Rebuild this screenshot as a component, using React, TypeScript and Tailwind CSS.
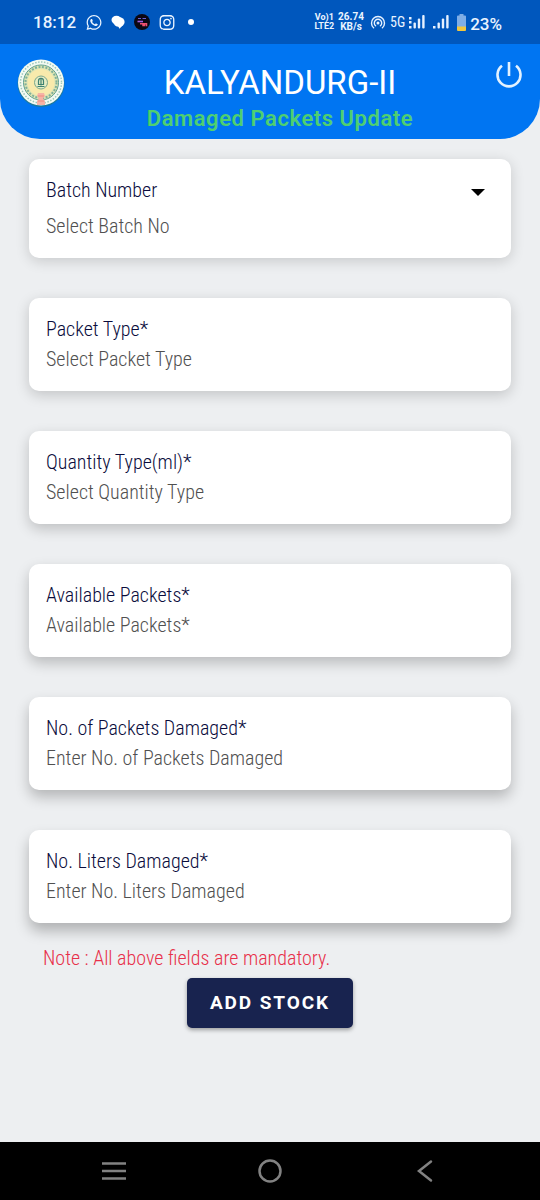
import React from 'react';
import { FaInstagram, FaWhatsapp } from 'react-icons/fa';

type FieldProps = {
  id: string;
  label: string;
  placeholder: string;
  shadow: string;
};

const FIELDS: FieldProps[] = [
  { id: 'packet-type', label: 'Packet Type*', placeholder: 'Select Packet Type', shadow: 'shadow-[0_4px_14px_rgba(0,0,0,0.18)]' },
  { id: 'quantity-type', label: 'Quantity Type(ml)*', placeholder: 'Select Quantity Type', shadow: 'shadow-[0_5px_14px_rgba(0,0,0,0.20)]' },
  { id: 'available-packets', label: 'Available Packets*', placeholder: 'Available Packets*', shadow: 'shadow-[0_6px_14px_rgba(0,0,0,0.22)]' },
  { id: 'packets-damaged', label: 'No. of Packets Damaged*', placeholder: 'Enter No. of Packets Damaged', shadow: 'shadow-[0_7px_14px_rgba(0,0,0,0.24)]' },
  { id: 'liters-damaged', label: 'No. Liters Damaged*', placeholder: 'Enter No. Liters Damaged', shadow: 'shadow-[0_8px_14px_rgba(0,0,0,0.26)]' },
];

function MessageIcon() {
  return (
    <svg viewBox="0 0 14 14" className="h-3.5 w-3.5" fill="#fff">
      <ellipse cx="5.500" cy="5" rx="5" ry="4.200" />
      <ellipse cx="8" cy="7" rx="5.600" ry="4.800" />
      <path d="M7 11l1.500 2.800L12 10z" />
    </svg>
  );
}

function AppBadgeIcon() {
  return (
    <svg viewBox="0 0 16 16" className="h-4 w-4">
      <circle cx="8" cy="8" r="8" fill="#0b0712" />
      <path d="M4 4.500h3M8.500 4.500h3.500" stroke="#6b5fd4" strokeWidth="1.200" fill="none" />
      <path d="M3.500 7.500h5.500" stroke="#a45be0" strokeWidth="1.600" />
      <path d="M6 9.800h3v2.500M10.500 12.300V9.800h2v2.500" stroke="#f0506f" strokeWidth="1.500" fill="none" />
    </svg>
  );
}

function HotspotIcon() {
  return (
    <svg viewBox="0 0 16 14" className="h-3.5 w-4" fill="none" stroke="#e6f1ff" strokeWidth="1.400" strokeLinecap="round">
      <circle cx="8" cy="8" r="1.500" fill="#e6f1ff" stroke="none" />
      <path d="M5.600 10.800a3.700 3.700 0 1 1 4.800 0" />
      <path d="M3.600 12.800a6.500 6.500 0 1 1 8.800 0" />
    </svg>
  );
}

function SignalIcon({ roaming = false }: { roaming?: boolean }) {
  return (
    <svg viewBox="0 0 16 16" className="h-4 w-4" fill="#e6f1ff">
      {roaming ? (
        <path d="M0 3h2.500v2.500H0zM0 7h2.500v2.500H0zM0 12h2.500v2.500H0z" />
      ) : (
        <path d="M0 12h2.500v2.500H0z" />
      )}
      <rect x="4.500" y="8.500" width="2.400" height="6" rx="1" />
      <rect x="8.800" y="4.500" width="2.400" height="10" rx="1" />
      <rect x="13.200" y="1" width="2.400" height="13.500" rx="1" />
    </svg>
  );
}

function BatteryIcon() {
  return (
    <svg viewBox="0 0 9 17" className="h-[17px] w-[9px]">
      <path d="M2.500 0h4v1.500H8a1 1 0 0 1 1 1V13H0V2.500a1 1 0 0 1 1-1h1.500z" fill="#7faee6" />
      <path d="M0 12.500h9V16a1 1 0 0 1-1 1H1a1 1 0 0 1-1-1z" fill="#f3c73c" />
    </svg>
  );
}

function StateEmblem() {
  return (
    <svg viewBox="0 0 48 50" className="h-[50px] w-12 shrink-0" fill="none">
      <circle cx="24" cy="25.500" r="23.500" fill="#1c7a9c" />
      <circle cx="24" cy="24.500" r="23" fill="#f3faf3" />
      <circle cx="24" cy="24.500" r="20.500" stroke="#9cc8bb" strokeWidth="1.500" strokeDasharray="1.500 1.500" />
      <circle cx="24" cy="24.500" r="17.500" fill="#dfe5b4" stroke="#5fa08f" strokeWidth="1" />
      <circle cx="24" cy="24.500" r="15.500" stroke="#7fb09a" strokeWidth="2" strokeDasharray="2 1.500" />
      <circle cx="24" cy="24.500" r="13.500" fill="#f8eaac" />
      <circle cx="24" cy="24.500" r="6.500" fill="#e6edc4" stroke="#7aa88e" strokeWidth="1" />
      <path d="M21.500 23c0-3.500 5-3.500 5 0v3.500h-5zM20.500 28.500h7" stroke="#3f8272" strokeWidth="1.200" />
      <path d="M24 20.500v7" stroke="#3f8272" strokeWidth="1.200" />
      <path d="M21 35h6l1 3-2 2.500 2 2.500v4h-8v-4l2-2.500-2-2.500z" fill="#f6b3a6" />
      <path d="M21 38h6M21 43h6" stroke="#ee8d80" strokeWidth="1.200" />
    </svg>
  );
}

function StatusBar() {
  return (
    <div className="flex h-11 items-center justify-between bg-[#0057bd] pl-[33px] pr-[38px] text-[#eaf4ff]">
      <div className="flex items-center">
        <span className="text-[17px] font-medium leading-5">18:12</span>
        <div className="ml-2.5 flex items-center gap-[9px]">
          <FaWhatsapp className="h-[17px] w-4" />
          <MessageIcon />
          <AppBadgeIcon />
          <FaInstagram className="h-[17px] w-4" />
          <span className="ml-1 h-1.5 w-1.5 rounded-full bg-white" />
        </div>
      </div>
      <div className="flex items-center">
        <div className="text-center text-[9px] font-bold leading-[9px]">
          <div>Vo)1</div>
          <div>LTE2</div>
        </div>
        <div className="ml-1 text-center text-[10px] font-bold leading-[10px]">
          <div>26.74</div>
          <div>KB/s</div>
        </div>
        <div className="ml-1.5 flex items-center gap-1">
          <HotspotIcon />
          <span className="font-['Roboto_Condensed',Roboto,sans-serif] text-sm">5G</span>
          <SignalIcon roaming />
        </div>
        <div className="ml-2 flex items-center gap-2">
          <SignalIcon />
          <BatteryIcon />
        </div>
        <span className="ml-1 pt-1 text-[17px] font-medium leading-5">23%</span>
      </div>
    </div>
  );
}

function Header() {
  return (
    <header className="flex h-[95px] items-start rounded-b-[40px] bg-[#0075f2] px-[17px]">
      <div className="pt-3.5">
        <StateEmblem />
      </div>
      <div className="flex-1 pt-[19px] text-center">
        <h1 className="text-[33px] leading-10 text-white">KALYANDURG-II</h1>
        <p className="text-[22px] font-semibold leading-8 tracking-wide text-[#4fcf70]">Damaged Packets Update</p>
      </div>
      <button type="button" aria-label="Log out" className="mt-[17px]">
        <svg viewBox="0 0 28 28" className="h-7 w-7" fill="none" stroke="#e3f2ff" strokeWidth="2.600">
          <path d="M14 1v14" />
          <path d="M7 4.800a11.500 11.500 0 1 0 14 0" />
        </svg>
      </button>
    </header>
  );
}

function Field({ id, label, placeholder, shadow }: FieldProps) {
  return (
    <div className={`flex flex-col rounded-[10px] bg-white px-[17px] pb-[17px] pt-4 ${shadow}`}>
      <label htmlFor={id} className="text-xl font-light leading-[30px] text-[#0a0c3c]">
        {label}
      </label>
      <input
        id={id}
        type="text"
        placeholder={placeholder}
        className="h-[30px] w-full bg-transparent text-xl font-light text-[#222] outline-none placeholder:text-[#505050]"
      />
    </div>
  );
}

function BatchField() {
  return (
    <div className="rounded-[10px] bg-white px-[17px] pb-[17px] pt-4 shadow-[0_3px_14px_rgba(0,0,0,0.16)]">
      <div className="flex items-center justify-between pr-[9px]">
        <label htmlFor="batch" className="text-xl font-light leading-[30px] text-[#0a0c3c]">
          Batch Number
        </label>
        <svg viewBox="0 0 14 7" className="mt-1 h-[7px] w-3.5" fill="#000">
          <path d="M0 0h14L7 7z" />
        </svg>
      </div>
      <select id="batch" className="mt-1.5 h-[30px] w-full appearance-none bg-transparent text-xl font-light text-[#505050] outline-none">
        <option>Select Batch No</option>
      </select>
    </div>
  );
}

function NavBar() {
  return (
    <nav className="flex h-[58px] items-center justify-around bg-black px-9">
      <button type="button" aria-label="Recent apps">
        <svg viewBox="0 0 24 20" className="h-5 w-6" stroke="#828282" strokeWidth="2.500">
          <path d="M0 2.500h24M0 10h24M0 17.500h24" />
        </svg>
      </button>
      <button type="button" aria-label="Home">
        <svg viewBox="0 0 24 24" className="h-6 w-6" fill="none" stroke="#828282" strokeWidth="2.500">
          <circle cx="12" cy="12" r="10.500" />
        </svg>
      </button>
      <button type="button" aria-label="Back">
        <svg viewBox="0 0 24 24" className="h-6 w-6" fill="none" stroke="#828282" strokeWidth="2.500" strokeLinecap="round">
          <path d="M17 2.500L5 12l12 9.500" />
        </svg>
      </button>
    </nav>
  );
}

export default function App() {
  return (
    <div className="flex min-h-screen flex-col bg-[#edeff1] font-['Roboto',sans-serif]">
      <StatusBar />
      <Header />
      <main className="flex-1 px-[29px] pt-5 font-['Roboto_Condensed','Liberation_Sans_Narrow',Roboto,sans-serif]">
        <form>
          <div className="flex flex-col gap-10">
            <BatchField />
            {FIELDS.map((field) => (
              <Field key={field.id} {...field} />
            ))}
          </div>
          <p className="mt-5 px-3.5 text-xl font-light leading-[30px] text-[#e8304a]">
            Note : All above fields are mandatory.
          </p>
          <div className="mt-[5px] flex justify-center font-['Roboto',sans-serif]">
            <button
              type="button"
              className="h-[50px] rounded-[5px] bg-[#18234f] px-[23px] text-[19px] font-bold tracking-widest text-white shadow-[0_2px_4px_rgba(0,0,0,0.35)]"
            >
              ADD STOCK
            </button>
          </div>
        </form>
      </main>
      <NavBar />
    </div>
  );
}
